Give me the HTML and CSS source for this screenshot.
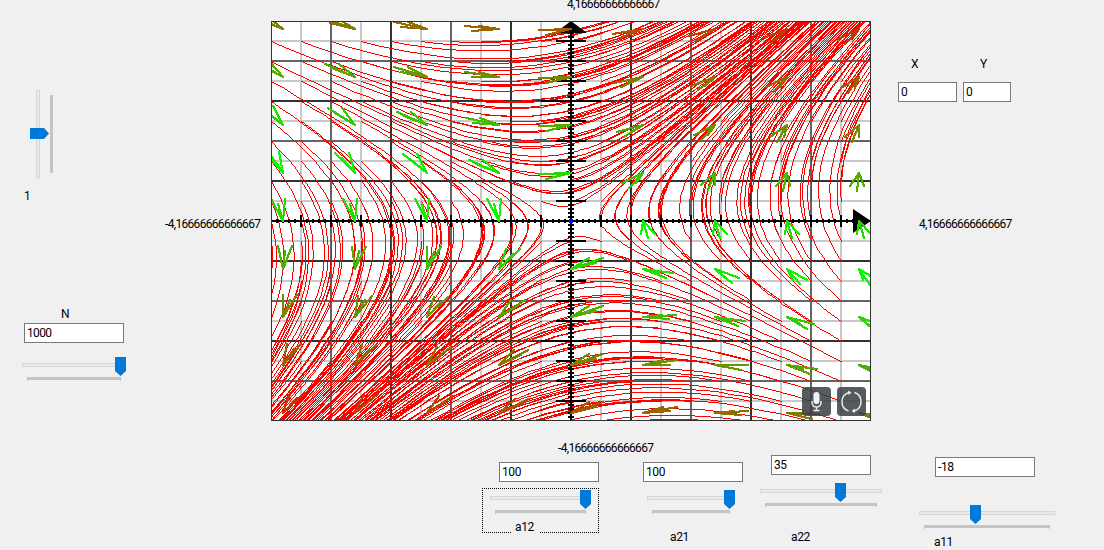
FILE: index.html
```
<!DOCTYPE html>
<html lang="en">
<head>
<meta charset="utf-8">
<title>Phase portrait</title>
<link rel="stylesheet" href="styles.css">
</head>
<body>
<main class="form">
  <section class="upper">
    <aside class="left">
      <div class="vslider"><span class="vtrack"></span><svg class="vthumb" width="19" height="11"><path d="M0 0H14L19 5.5L14 11H0Z"/></svg><span class="vticks"></span></div>
      <span class="one">1</span>
      <span class="range-left">-4,16666666666667</span>
      <label class="n-label">N</label>
      <div class="field">1000</div>
      <div class="slider s-n"><span class="track"></span><span class="ticks"></span><svg class="thumb" width="11" height="19"><path d="M0 0H11V14L5.5 19L0 14Z"/></svg></div>
    </aside>
    <div class="middle">
      <span class="range-top">4,16666666666667</span>
      <div class="plot">
        <canvas id="plot" width="600" height="400"></canvas>
        <div class="tools">
          <svg width="29" height="29" viewBox="0 0 29 29"><rect class="tool-bg" width="29" height="29" rx="4"/><rect class="mic" x="11.500" y="5" width="6" height="12" rx="3"/><path class="tool-line" d="M10 14V15.500A4.500 4.500 0 0 0 19 15.500V14M14.500 20V23.500M11.500 23.500H17.500"/></svg>
          <svg width="29" height="29" viewBox="0 0 29 29"><rect class="tool-bg" width="29" height="29" rx="4"/><path class="tool-line" d="M11.500 24A9.700 9.700 0 0 1 12 5.500M17.500 5.500A9.700 9.700 0 0 1 17 24"/><path class="mic" d="M11 3.500L14.500 5.500L11.500 8ZM18 21.500L14.500 24L18 26Z"/></svg>
        </div>
      </div>
      <span class="range-bottom">-4,16666666666667</span>
    </div>
    <aside class="right">
      <div class="coords">
        <div class="coord cx"><label>X</label><div class="field">0</div></div>
        <div class="coord cy"><label>Y</label><div class="field">0</div></div>
      </div>
      <span class="range-right">4,16666666666667</span>
    </aside>
  </section>
  <section class="params">
    <div class="param p12"><div class="field">100</div>
      <div class="focus"><div class="slider s12"><span class="track"></span><span class="ticks"></span><svg class="thumb" width="11" height="19"><path d="M0 0H11V14L5.5 19L0 14Z"/></svg></div></div>
      <label>a12</label></div>
    <div class="param p21"><div class="field">100</div>
      <div class="slider s21"><span class="track"></span><span class="ticks"></span><svg class="thumb" width="11" height="19"><path d="M0 0H11V14L5.5 19L0 14Z"/></svg></div>
      <label>a21</label></div>
    <div class="param p22"><div class="field">35</div>
      <div class="slider s22"><span class="track"></span><span class="ticks"></span><svg class="thumb" width="11" height="19"><path d="M0 0H11V14L5.5 19L0 14Z"/></svg></div>
      <label>a22</label></div>
    <div class="param p11"><div class="field">-18</div>
      <div class="slider s11"><span class="track"></span><span class="ticks"></span><svg class="thumb" width="11" height="19"><path d="M0 0H11V14L5.5 19L0 14Z"/></svg></div>
      <label>a11</label></div>
  </section>
</main>
<script src="plot.js"></script>
</body>
</html>
```
FILE: styles.css
```
* { box-sizing: border-box; }
body { margin: 0; background: #f0f0f0; color: #000; font: 12px/14px Roboto, "Liberation Sans", sans-serif; letter-spacing: -0.68px; }
.form { width: 1104px; height: 550px; overflow: hidden; }
.upper { display: grid; grid-template-columns: 271px 600px 233px; height: 456px; }
.left { display: flex; flex-direction: column; align-items: flex-start; padding-top: 90px; }
.field { width: 100px; height: 20px; background: #fff; border: 1px solid #7a7a7a; padding: 2px 2px; }
.vslider { position: relative; width: 24px; height: 89px; margin-left: 30px; }
.vtrack { position: absolute; left: 6px; top: 0; width: 4px; height: 88px; border: 1px solid #d6d6d6; background: #e7eaea; }
.vthumb { position: absolute; left: 0; top: 38px; }
.vticks { position: absolute; left: 20px; top: 5px; width: 3px; height: 78px; background: #c4c4c4; }
.thumb path, .vthumb path { fill: #0078d7; }
.one { margin: 10px 0 0 24px; }
.range-left { margin: 14px 0 0 165px; }
.n-label { margin: 76px 0 0 61px; }
.left .field { margin: 2px 0 0 24px; }
.slider { position: relative; height: 26px; }
.track { position: absolute; left: 0; right: 0; top: 6px; height: 4px; border: 1px solid #d6d6d6; background: #e7eaea; }
.ticks { position: absolute; left: 5px; right: 5px; top: 20px; height: 4px; border: 1px solid #c4c4c4; border-top-width: 3px; border-bottom: 0; }
.thumb { position: absolute; top: 0; left: var(--thumb); }
.s-n { --thumb: 93px; width: 104px; margin: 14px 0 0 22px; }
.middle { display: flex; flex-direction: column; }
.range-top { margin-left: 296px; height: 21px; line-height: 8px; }
.plot { position: relative; width: 600px; height: 400px; }
#plot { display: block; background: #fff; }
.tools { position: absolute; right: 5px; bottom: 5px; display: flex; gap: 6px; }
.tool-bg { fill: #394044; fill-opacity: .86; }
.mic { fill: #f2f2f2; }
.tool-line { fill: none; stroke: #e8e8e8; stroke-width: 1.5; }
.range-bottom { margin: 20px 0 0 287px; }
.right { padding: 57px 0 0 27px; }
.coords { display: flex; gap: 6px; }
.coord label { display: block; height: 25px; }
.cx label { padding-left: 13px; }
.cy label { padding-left: 17px; }
.cx .field { width: 59px; }
.cy .field { width: 48px; }
.range-right { display: block; margin: 115px 0 0 21px; }
.params { display: flex; height: 94px; }
.param { display: flex; flex-direction: column; align-items: flex-start; letter-spacing: -0.4px; }
.p12 { width: 161px; margin-left: 482px; padding-top: 6px; }
.p12 .field { margin-left: 17px; }
.focus { width: 117px; height: 45px; margin-top: 6px; border: 1px dotted #000; padding: 1px 0 0 7px; }
.s12 { --thumb: 90px; width: 101px; }
.p12 label { width: 27px; margin: -13px 0 0 30px; padding-left: 3px; background: #f0f0f0; }
.p21 { width: 117px; padding-top: 6px; }
.s21 { --thumb: 77px; width: 88px; margin: 8px 0 0 4px; }
.p21 label { margin: 14px 0 0 27px; }
.p22 { width: 159px; }
.p22 .field { margin: -1px 0 0 11px; }
.s22 { --thumb: 75px; width: 122px; margin-top: 8px; }
.p22 label { margin: 21px 0 0 31px; }
.p11 { width: 136px; padding-top: 1px; }
.p11 .field { margin-left: 16px; }
.s11 { --thumb: 51px; width: 136px; margin-top: 28px; }
.p11 label { margin: 4px 0 0 15px; }
```
FILE: plot.js
```
// Phase portrait of x' = a11 x + a12 y, y' = a21 x + a22 y
const A = { a11: -18, a12: 100, a21: 100, a22: 35 };
const W = 600, H = 400, CX = 300, CY = 200, UX = 72, UY = 48;
const ctx = document.getElementById('plot').getContext('2d');

function field(x, y) { return [A.a11 * x + A.a12 * y, A.a21 * x + A.a22 * y]; }

// aliased Bresenham line with a square pen
function line(x0, y0, x1, y1, color, pen = 1) {
  x0 = Math.round(x0); y0 = Math.round(y0); x1 = Math.round(x1); y1 = Math.round(y1);
  ctx.fillStyle = color;
  const off = pen >> 1, dx = Math.abs(x1 - x0), dy = -Math.abs(y1 - y0);
  const sx = x0 < x1 ? 1 : -1, sy = y0 < y1 ? 1 : -1;
  let err = dx + dy;
  for (;;) {
    ctx.fillRect(x0 - off, y0 - off, pen, pen);
    if (x0 === x1 && y0 === y1) break;
    const e2 = 2 * err;
    if (e2 >= dy) { err += dy; x0 += sx; }
    if (e2 <= dx) { err += dx; y0 += sy; }
  }
}
// centred axis-aligned bars
function vbar(x, y0, y1, color) { ctx.fillStyle = color; ctx.fillRect(x - 1, y0, 2, y1 - y0); }
function hbar(y, x0, x1, color) { ctx.fillStyle = color; ctx.fillRect(x0, y - 1, x1 - x0, 2); }

// grid, lighter lines first
[[1, '#c8c8c8'], [2, '#646464'], [4, '#323232']].forEach(([kind, color]) => {
  for (let i = -9; i <= 9; i++) {
    const k = i % 2 ? 1 : (i / 2) % 2 ? 4 : 2;
    if (k !== kind) continue;
    vbar(CX + i * 30, 0, H, color);
    hbar(CY + i * 20, 0, W, color);
  }
});

// trajectories
const dt = 0.0001;
for (let i = -10; i < 10; i++) {
  for (let j = -9; j < 11; j++) {
    if (!i && !j) continue;
    let x = i * 30 / UX, y = -j * 20 / UY;
    let px = CX + i * 30, py = CY + j * 20;
    for (let n = 1; n <= 1000; n++) {
      const [vx, vy] = field(x, y);
      x += vx * dt; y += vy * dt;
      if (n % 5) continue;
      const nx = CX + x * UX, ny = CY - y * UY;
      if (Math.hypot(nx - px, ny - py) < 3) continue;
      line(px, py, nx, ny, '#f00');
      px = nx; py = ny;
      if (Math.abs(x) > 4.3 || Math.abs(y) > 4.3) break;
    }
  }
}

// axes
vbar(CX, 0, H, '#000');
hbar(CY, 0, W, '#000');
for (let i = -49; i < 50; i++) {
  vbar(CX + i * 6, CY - 2, CY + 2, '#000');
  hbar(CY + i * 4, CX - 3, CX + 3, '#000');
}
for (let i = -9; i < 10; i++) {
  vbar(CX + i * 30, CY - 6, CY + 6, '#000');
  hbar(CY + i * 20, CX - 15, CX + 15, '#000');
}
hbar(CY - 120, CX - 30, CX + 30, '#000');
hbar(CY + 120, CX - 30, CX + 30, '#000');
ctx.fill(new Path2D('M300 0L316 12H284ZM600 200L582 188V212Z'));
ctx.fillStyle = '#00f';
ctx.fillRect(CX - 2, CY - 2, 4, 4);

// direction arrows
for (let x = -4; x <= 4; x++) {
  for (let y = -4; y <= 4; y++) {
    if (!x && !y) continue;
    const [vx, vy] = field(x, y), m = Math.hypot(vx, vy);
    const tx = CX + x * UX, ty = CY - y * UY;
    const bx = tx - vx / m * .37 * UX, by = ty + vy / m * .37 * UY;
    const c = Math.min(255, Math.abs(10 * x + 41 * y));
    const color = `rgb(${c},${255 - c},0)`;
    line(bx, by, tx, ty, color, 2);
    line(bx - 7, by - 4.8, tx, ty, color, 2);
    line(bx + 7, by - 4.8, tx, ty, color, 2);
  }
}
ctx.strokeStyle = '#323232';
ctx.strokeRect(.5, .5, W - 1, H - 1);
```
